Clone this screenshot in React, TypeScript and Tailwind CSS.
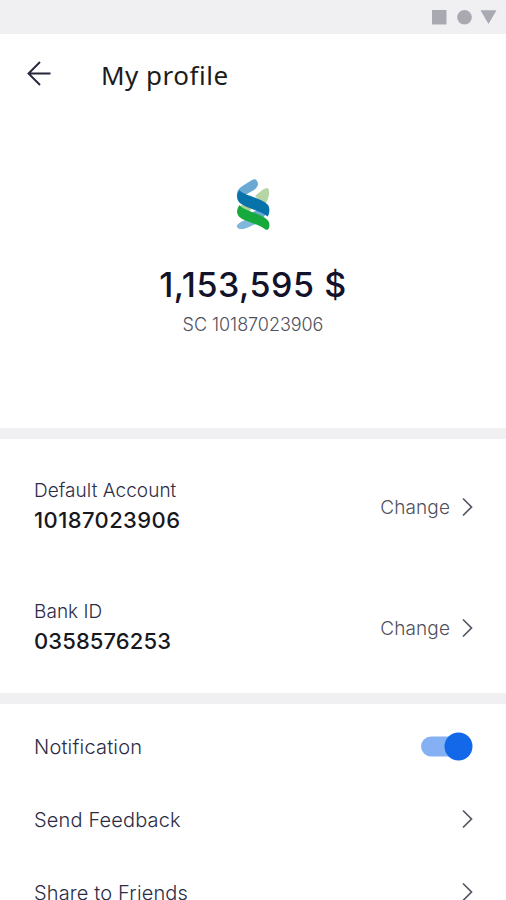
import { useState } from 'react';

const accounts = [
  { label: 'Default Account', value: '10187023906', spacing: 'tracking-[0.4px]' },
  { label: 'Bank ID', value: '0358576253', spacing: 'tracking-[0.1px]' },
];

const links = ['Send Feedback', 'Share to Friends'];

const Chevron = () => (
  <svg width="11" height="20" viewBox="0 0 11 20" fill="none" stroke="#555562" strokeWidth="1.7" className="mb-[2px]">
    <path d="M1 1.500 9.500 10 1 18.500" />
  </svg>
);

const StatusBar = () => (
  <div className="flex h-[34px] items-center justify-end bg-[#f0f0f3] pr-[9px]">
    <svg width="66" height="16" viewBox="0 0 66 16" fill="#a9a9b2">
      <rect x="1" y="1" width="14.5" height="14.5" />
      <circle cx="33.5" cy="8.3" r="7.3" />
      <path d="M49.500 1.200H65.500L57.500 15Z" />
    </svg>
  </div>
);

const Logo = () => (
  <svg width="34" height="52" viewBox="0 0 34 52">
    <path d="M1 18C0 12 3 9 8 6L16 1C18 0 20 0 21 2C23 5 22 8 18 11L9 16Z" fill="#69a9d2" />
    <path d="M19 17C23 14 27 9 32 9C34 13 33 19 30 24L27 25Z" fill="#b5d6a4" />
    <path d="M2 34C2 28 4 26 9 25L17 28L11 35Z" fill="#abd09a" />
    <path d="M1 48C0 45 5 43 9 41L15 42L20 45C14 47 9 51 4 50Q2 50 1 48Z" fill="#80b7dc" />
    <path d="M16 34L22 30L30 35L26 40Z" fill="#69a9d2" />
    <path d="M3.500 11C6 14.500 11 15.500 16 17.500C22 20 28 22 31.500 25.500C34 28 34 34 31.500 37.500C27 33.500 21 32 16 30C10 27.500 4 25.500 2 21.500C0 18 1.500 14 3.500 11Z" fill="#0872aa" />
    <path d="M3.500 26C6 29.500 11 31 16 33C22 35.500 28 37.500 31.500 41C34 43.500 34 48 32 50.500Q31 51 29.500 50.500C25 47 21 46 16 44C10 41.500 4 40 2 36C0 32.500 1.500 29 3.500 26Z" fill="#16aa3c" />
  </svg>
);

export default function App() {
  const [notify, setNotify] = useState(true);

  return (
    <div className="h-[900px] w-[506px] overflow-hidden bg-white font-['Inter',sans-serif] text-[#2c2c46]">
      <StatusBar />

      <header className="flex h-[83px] items-center pl-[27px]">
        <button aria-label="Back" className="mb-1">
          <svg width="24" height="26" viewBox="0 0 24 26" fill="none" stroke="#25253b" strokeWidth="1.9">
            <path d="M23.500 12.500H1.500M13 1 1.500 12.500 13 24" />
          </svg>
        </button>
        <h1 className="mb-[2px] ml-[50px] font-['Noto_Sans',sans-serif] text-[26px] leading-8 tracking-[0.5px] text-[#1c1c20]">My profile</h1>
      </header>

      <section className="flex h-[311px] flex-col items-center pt-[62px]">
        <Logo />
        <p className="mt-[33px] text-[34px] leading-[42px] font-medium tracking-[0.55px] text-[#12122a]">1,153,595 $</p>
        <p className="mt-[7px] text-[18px] leading-6 font-light tracking-[-0.05px] text-[#50505c]">SC 10187023906</p>
      </section>

      <section className="h-[265px] border-t-[11px] border-[#f0f0f3] pt-[38px]">
        {accounts.map(({ label, value, spacing }) => (
          <div key={value} className="flex h-[121px] items-start justify-between pr-[33px] pl-[34px]">
            <div>
              <p className="pt-px text-[19px] leading-[26px] font-light tracking-[0.05px]">{label}</p>
              <p className={`mt-[2px] text-[22px] leading-7 font-medium text-[#18181f] ${spacing}`}>{value}</p>
            </div>
            <button className="mt-[17px] flex items-center gap-3 text-[19px] leading-[26px] font-light tracking-[0.1px] text-[#50505c]">
              <span className="pt-px">Change</span>
              <Chevron />
            </button>
          </div>
        ))}
      </section>

      <section className="border-t-[11px] border-[#f0f0f3] pt-[6px]">
        <div className="flex h-[73px] items-center justify-between pr-[33px] pl-[34px]">
          <span className="text-[20px] font-light tracking-[0.2px]">Notification</span>
          <button role="switch" aria-checked={notify} aria-label="Notification" onClick={() => setNotify(!notify)}>
            <svg width="53" height="29" viewBox="0 0 53 29">
              <rect x="1" y="4.500" width="44" height="20" rx="10" fill="#85b1f4" />
              <circle cx={notify ? 38.5 : 14.5} cy="14.500" r="14" fill="#1268e8" />
            </svg>
          </button>
        </div>
        {links.map((link) => (
          <div key={link} className="flex h-[73px] items-center justify-between pr-[33px] pl-[34px]">
            <span className="text-[20px] font-light tracking-[0.15px]">{link}</span>
            <Chevron />
          </div>
        ))}
      </section>
    </div>
  );
}
